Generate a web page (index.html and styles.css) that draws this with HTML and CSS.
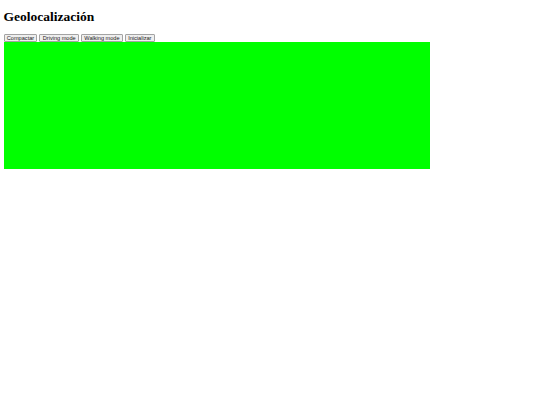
FILE: index.html
```html
<!DOCTYPE html>
<html lang="es">
<head>
<meta charset="utf-8">
<title>Geolocalización</title>
<link rel="stylesheet" href="styles.css">
</head>
<body>
<h1 class="title">Geolocalización</h1>
<div class="controls">
<button class="btn">Compactar</button>
<button class="btn">Driving mode</button>
<button class="btn">Walking mode</button>
<button class="btn">Inicializar</button>
</div>
<div class="map"></div>
</body>
</html>
```

FILE: styles.css
```css
html, body {
  margin: 0;
  padding: 0;
  background: #ffffff;
}
body {
  padding: 0 3.5px;
  font-family: "Liberation Serif", "Times New Roman", serif;
}
.title {
  font-family: "Liberation Serif", "Times New Roman", serif;
  font-size: 13.5px;
  font-weight: bold;
  line-height: 16px;
  margin: 0;
  padding: 8.5px 0 9px;
  color: #000000;
}
.controls {
  display: flex;
  gap: 2px;
  height: 8.5px;
}
.btn {
  box-sizing: border-box;
  height: 8.5px;
  margin: 0;
  padding: 0 2.3px;
  font-family: "Liberation Sans", Arial, sans-serif;
  font-size: 5.6px;
  line-height: 6px;
  color: #222222;
  background: #efefef;
  border: 1px solid #a3a3a3;
  border-radius: 1px;
}
.map {
  width: 426.5px;
  height: 127px;
  background: #00ff00;
}
```
